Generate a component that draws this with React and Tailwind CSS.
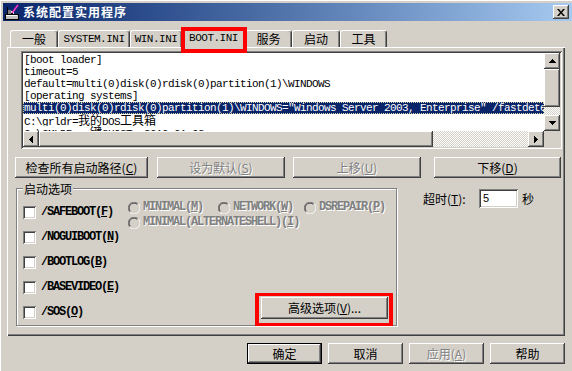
import React from "react";

const raised =
  "shadow-[inset_-1px_-1px_0_#404040,inset_1px_1px_0_#ffffff,inset_-2px_-2px_0_#808080,inset_2px_2px_0_#d4d0c8]";
const sunken =
  "shadow-[inset_1px_1px_0_#808080,inset_-1px_-1px_0_#ffffff,inset_2px_2px_0_#404040,inset_-2px_-2px_0_#d4d0c8]";
const mono = "font-['Liberation_Mono','Noto_Sans_CJK_SC',monospace]";
const emboss = "text-[#808080] [text-shadow:1px_1px_0_#ffffff]";
const dither =
  "[background-image:repeating-conic-gradient(#d4d0c8_0%_25%,#ffffff_0%_50%)] [background-size:2px_2px]";

function Arrow({ dir }) {
  if (dir === "up")
    return (
      <svg width="7" height="4" shapeRendering="crispEdges">
        <rect x="3" y="0" width="1" height="1" fill="#000" />
        <rect x="2" y="1" width="3" height="1" fill="#000" />
        <rect x="1" y="2" width="5" height="1" fill="#000" />
        <rect x="0" y="3" width="7" height="1" fill="#000" />
      </svg>
    );
  if (dir === "down")
    return (
      <svg width="7" height="4" shapeRendering="crispEdges">
        <rect x="0" y="0" width="7" height="1" fill="#000" />
        <rect x="1" y="1" width="5" height="1" fill="#000" />
        <rect x="2" y="2" width="3" height="1" fill="#000" />
        <rect x="3" y="3" width="1" height="1" fill="#000" />
      </svg>
    );
  if (dir === "left")
    return (
      <svg width="4" height="7" shapeRendering="crispEdges">
        <rect x="0" y="3" width="1" height="1" fill="#000" />
        <rect x="1" y="2" width="1" height="3" fill="#000" />
        <rect x="2" y="1" width="1" height="5" fill="#000" />
        <rect x="3" y="0" width="1" height="7" fill="#000" />
      </svg>
    );
  return (
    <svg width="4" height="7" shapeRendering="crispEdges">
      <rect x="0" y="0" width="1" height="7" fill="#000" />
      <rect x="1" y="1" width="1" height="5" fill="#000" />
      <rect x="2" y="2" width="1" height="3" fill="#000" />
      <rect x="3" y="3" width="1" height="1" fill="#000" />
    </svg>
  );
}

function ScrollBtn({ dir }) {
  return (
    <div className={"w-[16px] h-[16px] shrink-0 bg-[#d4d0c8] flex items-center justify-center " + raised}>
      <Arrow dir={dir} />
    </div>
  );
}

function Tab({ w, children, isMono, selected }) {
  return (
    <div
      className={
        w +
        " bg-[#d4d0c8] border-t border-l border-white border-r border-r-[#404040] rounded-t-[3px] shadow-[inset_-1px_0_0_#808080] flex items-center justify-center leading-[12px] " +
        (selected ? "h-[20px] -mb-px relative z-10 pb-[2px] " : "h-[17px] ") +
        (isMono ? mono + " text-[11px] tracking-[-0.5px]" : "text-[12px]")
      }
    >
      {children}
      {selected && (
        <div className="absolute -left-[2px] -top-[2px] w-[66px] h-[26px] border-4 border-[#ff0000] pointer-events-none"></div>
      )}
    </div>
  );
}

function Btn({ className = "", disabled, def, children }) {
  return (
    <div
      className={
        "h-full flex items-center justify-center bg-[#d4d0c8] text-[12px] leading-[14px] relative " +
        (def ? "border border-black " : "") +
        raised +
        " " +
        (disabled ? emboss + " " : "") +
        className
      }
    >
      {children}
    </div>
  );
}

function Check() {
  return <div className={"w-[13px] h-[13px] shrink-0 bg-white " + sunken}></div>;
}

function Radio() {
  return (
    <svg width="12" height="12" viewBox="0 0 12 12" className="shrink-0">
      <circle cx="6" cy="6" r="5.5" fill="#d4d0c8" />
      <path d="M1.8 10.2 A5.5 5.5 0 0 1 10.2 1.8" stroke="#808080" strokeWidth="1" fill="none" />
      <path d="M10.2 1.8 A5.5 5.5 0 0 1 1.8 10.2" stroke="#ffffff" strokeWidth="1" fill="none" />
      <path d="M2.5 9.5 A4.5 4.5 0 0 1 9.5 2.5" stroke="#404040" strokeWidth="1" fill="none" />
      <path d="M9.5 2.5 A4.5 4.5 0 0 1 2.5 9.5" stroke="#d4d0c8" strokeWidth="1" fill="none" />
    </svg>
  );
}

const optText = "text-[12px] font-bold leading-[13px] tracking-[-1.2px] whitespace-nowrap";

function CheckRow({ label, mn, children }) {
  return (
    <div className="flex items-start h-[25px]">
      <div className="flex items-start">
        <div className="mt-[6px]">
          <Check />
        </div>
        <span className={"ml-[5px] mt-[6px] " + optText + " " + mono}>
          {label}(<u>{mn}</u>)
        </span>
      </div>
      {children}
    </div>
  );
}

function RadioItem({ w, label, mn }) {
  return (
    <div className={"flex items-center " + w}>
      <Radio />
      <span className={"ml-[3px] " + optText + " " + mono + " " + emboss}>
        {label}(<u>{mn}</u>)
      </span>
    </div>
  );
}

function TitleIcon() {
  return (
    <svg width="16" height="16" viewBox="0 0 16 16" shapeRendering="crispEdges" className="shrink-0">
      <rect x="1" y="10" width="13" height="5" fill="#c0c0c0" stroke="#000" strokeWidth="1" />
      <rect x="2" y="11" width="11" height="1" fill="#ffffff" />
      <rect x="3" y="3" width="1" height="8" fill="#000" />
      <rect x="4" y="6" width="3" height="4" fill="#808080" />
      <rect x="7" y="7" width="3" height="3" fill="#e0e0e0" />
      <path d="M14 1 L8 9" stroke="#ff33cc" strokeWidth="1.6" shapeRendering="auto" />
      <rect x="7" y="9" width="2" height="1" fill="#000" />
    </svg>
  );
}

function CJK({ children }) {
  return <span className="text-[12px] tracking-normal font-['Noto_Sans_CJK_SC',sans-serif] leading-[12px]">{children}</span>;
}

function Line({ children, sel }) {
  return (
    <div
      className={
        "h-[12px] leading-[12px] pl-[1px] whitespace-nowrap overflow-hidden " +
        (sel ? "bg-[#0a246a] text-white outline-1 outline-dotted outline-[#d8d0a0] -outline-offset-1" : "")
      }
    >
      {children}
    </div>
  );
}

export default function App() {
  return (
    <div className="w-[572px] h-[371px] bg-[#d4d0c8] overflow-hidden pt-[3px] pl-[3px] font-['Noto_Sans_CJK_SC',sans-serif] text-[12px] text-black select-none shadow-[inset_1px_1px_0_#ffffff]">
      {/* Title bar */}
      <div className="h-[18px] flex items-center bg-linear-to-r from-[#0a246a] to-[#a6caf0] pl-[1px] pr-[3px]">
        <TitleIcon />
        <span className="ml-[3px] text-white font-bold text-[12px] leading-[14px] tracking-[1px]">系统配置实用程序</span>
        <div className={"ml-auto w-[16px] h-[14px] bg-[#d4d0c8] flex items-center justify-center " + raised}>
          <svg width="8" height="7" viewBox="0 0 8 7">
            <path d="M0 0 H2 L4 2.5 L6 0 H8 L5 3.5 L8 7 H6 L4 4.5 L2 7 H0 L3 3.5 Z" fill="#000" />
          </svg>
        </div>
      </div>

      <div className="ml-[4px] w-[558px] mt-[7px]">
        {/* Tabs */}
        <div className="flex items-end h-[19px] pl-[3px]">
          <Tab w="w-[48px]">一般</Tab>
          <Tab w="w-[72px]" isMono>SYSTEM.INI</Tab>
          <Tab w="w-[52px]" isMono>WIN.INI</Tab>
          <Tab w="w-[63px]" isMono selected>BOOT.INI</Tab>
          <Tab w="w-[47px]">服务</Tab>
          <Tab w="w-[48px]">启动</Tab>
          <Tab w="w-[47px]">工具</Tab>
        </div>

        {/* Panel */}
        <div className="h-[289px] flex flex-col pt-[4px] shadow-[inset_1px_1px_0_#ffffff,inset_-1px_-1px_0_#404040,inset_-2px_-2px_0_#808080]">
          {/* List box */}
          <div className={"ml-[14px] w-[541px] h-[98px] bg-white p-[2px] flex flex-col " + sunken}>
            <div className="flex h-[78px]">
              <div className={"w-[521px] h-[78px] overflow-hidden pt-[1px] text-[11px] tracking-[-0.6px] " + mono}>
                <Line>[boot loader]</Line>
                <Line>timeout=5</Line>
                <Line>default=multi(0)disk(0)rdisk(0)partition(1)\WINDOWS</Line>
                <Line>[operating systems]</Line>
                <Line sel>
                  multi(0)disk(0)rdisk(0)partition(1)\WINDOWS="Windows Server 2003, Enterprise" /fastdetect
                </Line>
                <Line>
                  C:\grldr=<CJK>我的</CJK>DOS<CJK>工具箱</CJK>
                </Line>
                <Line>
                  C:\CMLDR=<CJK>一键</CJK>GHOST v2010.01.02
                </Line>
              </div>
              <div className="w-[16px] flex flex-col">
                <ScrollBtn dir="up" />
                <div className={"h-[38px] bg-[#d4d0c8] " + raised}></div>
                <div className={"h-[8px] " + dither}></div>
                <ScrollBtn dir="down" />
              </div>
            </div>
            <div className="flex h-[16px]">
              <ScrollBtn dir="left" />
              <div className={"w-[394px] h-[16px] bg-[#d4d0c8] " + raised}></div>
              <div className={"w-[95px] h-[16px] " + dither}></div>
              <ScrollBtn dir="right" />
              <div className="w-[16px] h-[16px] bg-[#d4d0c8]"></div>
            </div>
          </div>

          {/* Buttons row */}
          <div className="flex mt-[8px] ml-[8px] h-[21px]">
            <Btn className="w-[133px]">
              检查所有启动路径(<u>C</u>)
            </Btn>
            <Btn className="w-[128px] ml-[9px]" disabled>
              设为默认(<u>S</u>)
            </Btn>
            <Btn className="w-[128px] ml-[8px]" disabled>
              上移(<u>U</u>)
            </Btn>
            <Btn className="w-[127px] ml-[13px]">
              下移(<u>D</u>)
            </Btn>
          </div>

          {/* Group + timeout */}
          <div className="flex mt-[10px] ml-[9px] items-start">
            <div className="relative w-[381px] h-[138px] border border-[#808080] shadow-[1px_1px_0_#ffffff,inset_1px_1px_0_#ffffff] pt-[11px] pl-[6px] flex flex-col">
              <span className="absolute left-[6px] -top-[7px] px-[1px] bg-[#d4d0c8] leading-[13px] text-[12px]">启动选项</span>
              <CheckRow label="/SAFEBOOT" mn="F">
                <div className="flex flex-col ml-[15px]">
                  <div className="flex h-[15px]">
                    <RadioItem w="w-[90px]" label="MINIMAL" mn="M" />
                    <RadioItem w="w-[86px]" label="NETWORK" mn="W" />
                    <RadioItem w="w-[80px]" label="DSREPAIR" mn="P" />
                  </div>
                  <div className="flex h-[15px]">
                    <RadioItem w="w-[200px]" label="MINIMAL(ALTERNATESHELL)" mn="I" />
                  </div>
                </div>
              </CheckRow>
              <CheckRow label="/NOGUIBOOT" mn="N" />
              <CheckRow label="/BOOTLOG" mn="B" />
              <CheckRow label="/BASEVIDEO" mn="E" />
              <div className="flex items-start h-[25px]">
                <div className="mt-[6px]">
                  <Check />
                </div>
                <span className={"ml-[5px] mt-[6px] " + optText + " " + mono}>
                  /SOS(<u>O</u>)
                </span>
                <div className="ml-auto mr-[8px] -mt-[3px] w-[127px] h-[22px] relative">
                  <Btn className="w-[127px]">
                    高级选项(<u>V</u>)...
                  </Btn>
                  <div className="absolute -left-[6px] -top-[4px] -right-[5px] -bottom-[7px] border-[3px] border-l-4 border-r-4 border-[#ff0000] pointer-events-none z-20"></div>
                </div>
              </div>
            </div>

            <div className="ml-[26px] mt-[1px] flex items-center h-[19px]">
              <span className="w-[56px] leading-[14px]">
                超时(<u>T</u>):
              </span>
              <div className={"w-[39px] h-[19px] bg-white flex items-center pl-[4px] text-[11px] font-['Liberation_Sans',sans-serif] " + sunken}>
                5
              </div>
              <span className="ml-[4px] leading-[14px]">秒</span>
            </div>
          </div>
        </div>

        {/* Bottom buttons */}
        <div className="flex justify-end gap-[6px] mt-[7px] h-[21px]">
          <Btn className="w-[75px]" def>
            确定
          </Btn>
          <Btn className="w-[75px]">取消</Btn>
          <Btn className="w-[75px]" disabled>
            应用(<u>A</u>)
          </Btn>
          <Btn className="w-[75px]">帮助</Btn>
        </div>
      </div>
    </div>
  );
}
